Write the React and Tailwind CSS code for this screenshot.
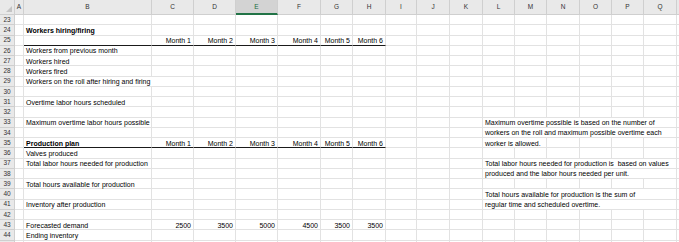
import React from 'react';

const cols = ['A', 'B', 'C', 'D', 'E', 'F', 'G', 'H', 'I', 'J', 'K', 'L', 'M', 'N', 'O', 'P', 'Q'];

const months = ['Month 1', 'Month 2', 'Month 3', 'Month 4', 'Month 5', 'Month 6'];
const demand = ['2500', '3500', '5000', '4500', '3500', '3500'];

const monthCells = (vals) => vals.map((v, i) => ({ col: 2 + i, text: v, right: true }));

// each row: number, cells ({ col index, span, text, bold, right }), thick bottom border under B-H
const rows = [
    { n: 23, cells: [] },
    { n: 24, cells: [{ col: 1, text: 'Workers hiring/firing', bold: true }] },
    { n: 25, cells: monthCells(months), line: true },
    { n: 26, cells: [{ col: 1, text: 'Workers from previous month' }] },
    { n: 27, cells: [{ col: 1, text: 'Workers hired' }] },
    { n: 28, cells: [{ col: 1, text: 'Workers fired' }] },
    { n: 29, cells: [{ col: 1, span: 2, text: 'Workers on the roll after hiring and firing' }] },
    { n: 30, cells: [] },
    { n: 31, cells: [{ col: 1, text: 'Overtime labor hours scheduled' }] },
    { n: 32, cells: [] },
    {
        n: 33, cells: [
            { col: 1, text: 'Maximum overtime labor hours possible' },
            { col: 11, span: 6, text: 'Maximum overtime possible is based on the number of' },
        ]
    },
    { n: 34, cells: [{ col: 11, span: 6, text: 'workers on the roll and maximum possible overtime each' }] },
    {
        n: 35, cells: [
            { col: 1, text: 'Production plan', bold: true },
            ...monthCells(months),
            { col: 11, span: 2, text: 'worker is allowed.' },
        ], line: true
    },
    { n: 36, cells: [{ col: 1, text: 'Valves produced' }] },
    {
        n: 37, cells: [
            { col: 1, text: 'Total labor hours needed for production' },
            { col: 11, span: 6, text: 'Total labor hours needed for production is \u00a0based on values' },
        ]
    },
    { n: 38, cells: [{ col: 11, span: 6, text: 'produced and the labor hours needed per unit.' }] },
    { n: 39, cells: [{ col: 1, text: 'Total hours available for production' }] },
    { n: 40, cells: [{ col: 11, span: 6, text: 'Total hours available for production is the sum of' }] },
    {
        n: 41, cells: [
            { col: 1, text: 'Inventory after production' },
            { col: 11, span: 6, text: 'regular time and scheduled overtime.' },
        ]
    },
    { n: 42, cells: [] },
    { n: 43, cells: [{ col: 1, text: 'Forecasted demand' }, ...monthCells(demand)] },
    { n: 44, cells: [{ col: 1, text: 'Ending inventory' }] },
    { n: null, cells: [] }, // row 45, only its top edge shows
];

const gridCls = 'grid grid-cols-[15px_9px_128px_42px_42px_42px_43px_32px_33px_31px_33px_33px_32px_32px_33px_32px_32px_33px_1fr]';

const SheetRow = ({ row }) => {
    const out = [];
    let c = 0;
    while (c < cols.length) {
        const cell = row.cells.find(x => x.col === c);
        const span = cell?.span || 1;
        const thick = row.line && c >= 1 && c <= 7;
        out.push(
            <div
                key={c}
                className={`${span === 6 ? 'col-span-6' : span === 2 ? 'col-span-2' : ''} flex items-center overflow-visible whitespace-nowrap border-r border-[#e2e2e2] px-[2px] ${thick ? 'border-b-[1.5px] border-b-[#1a1a1a]' : 'border-b border-b-[#e2e2e2]'} ${cell?.right ? 'justify-end' : ''} ${cell?.bold ? 'font-bold' : ''}`}
            >
                {cell ? <span className="pt-[1px] leading-none">{cell.text}</span> : null}
            </div>
        );
        c += span;
    }
    return (
        <div className={`${gridCls} h-[10.25px]`}>
            <div className="flex items-center justify-center border-r border-b border-[#cfcfcf] bg-[#e9e9e9] pt-[1px] text-[6.5px] leading-none text-[#333]">
                {row.n}
            </div>
            {out}
            <div className="border-b border-[#e2e2e2]" />
        </div>
    );
};

export default function App() {
    return (
        <div className="h-[242px] w-[679px] overflow-hidden bg-white font-['Liberation_Sans',Arial,sans-serif] text-[7px] text-black">
            <div className={`${gridCls} h-[15px] bg-[#e9e9e9] text-[6.5px] text-[#333]`}>
                <div className="relative border-r border-b border-[#cfcfcf]">
                    <svg className="absolute right-[2px] bottom-[2px]" width="6" height="6" viewBox="0 0 6 6">
                        <polygon points="6,0 6,6 0,6" fill="#c4c4c4" />
                    </svg>
                </div>
                {cols.map(l => (
                    <div
                        key={l}
                        className={`flex items-center justify-center border-r border-[#cfcfcf] ${l === 'E' ? 'border-b-2 border-b-[#217346] bg-[#d3d3d3] text-[#1e6b40]' : 'border-b border-b-[#cfcfcf]'}`}
                    >
                        {l}
                    </div>
                ))}
                <div className="border-b border-[#cfcfcf]" />
            </div>
            {rows.map((r, i) => <SheetRow key={i} row={r} />)}
        </div>
    );
}
